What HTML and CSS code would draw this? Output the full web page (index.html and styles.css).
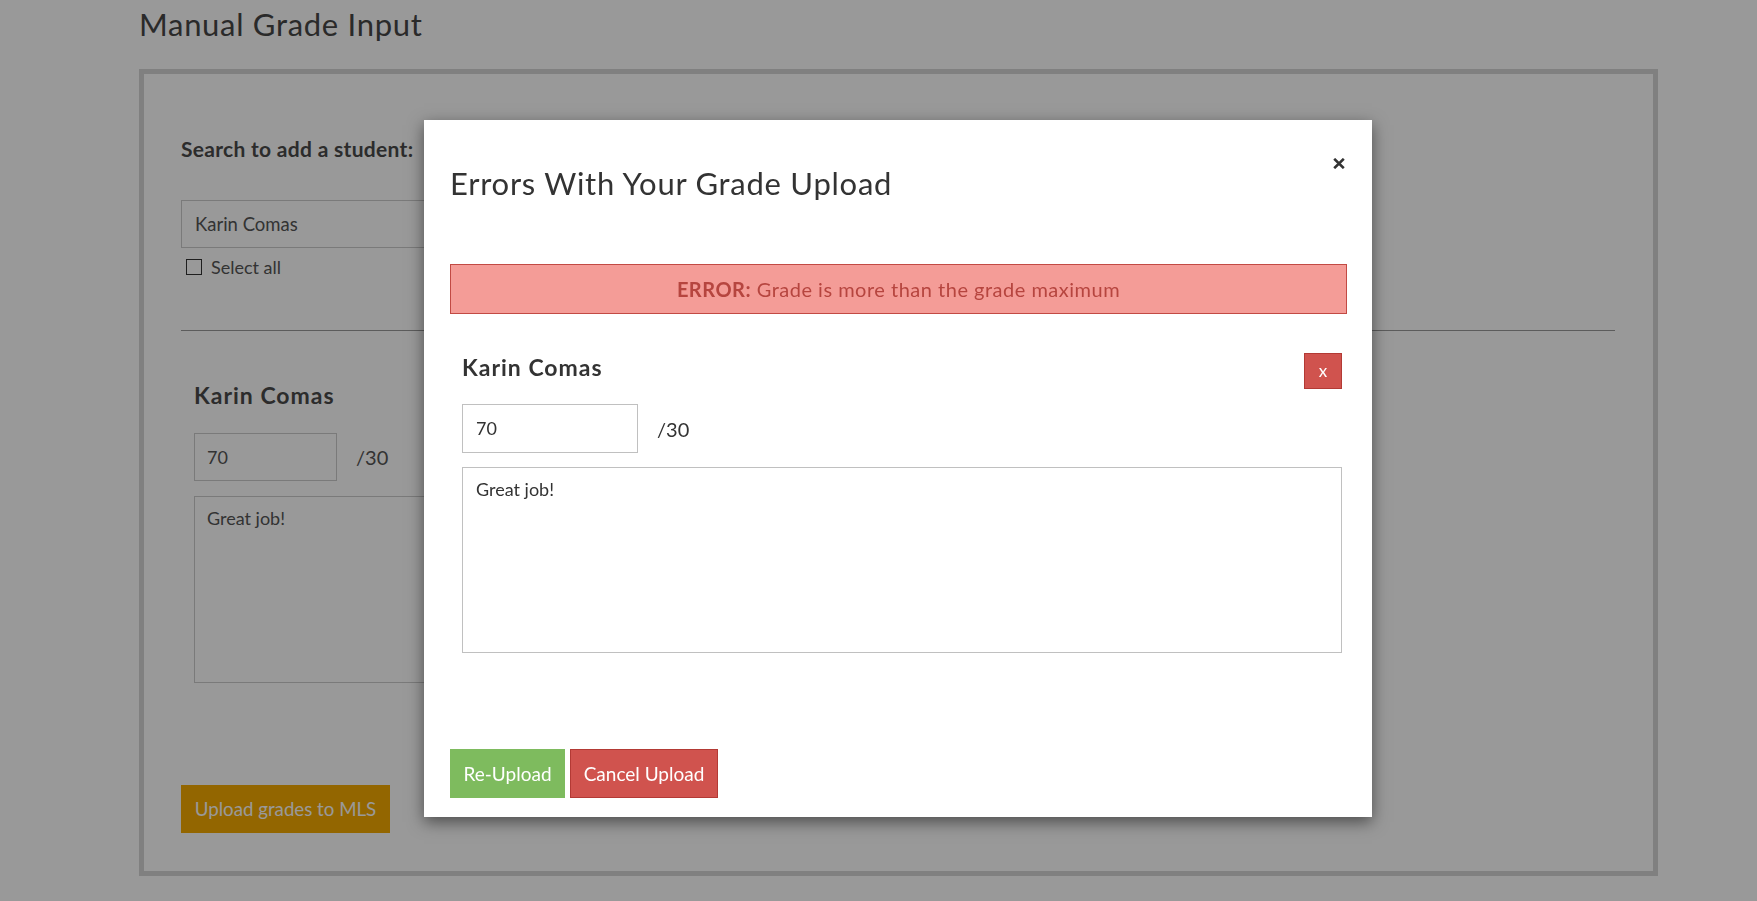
FILE: index.html
```html
<!DOCTYPE html>
<html lang="en">
<head>
<meta charset="utf-8">
<title>Manual Grade Input</title>
<link rel="stylesheet" href="styles.css">
</head>
<body>
<div class="page">
  <h1 class="page-title">Manual Grade Input</h1>
  <div class="box">
    <div class="search">
      <label class="search-label">Search to add a student:</label>
      <div class="search-input">Karin Comas</div>
      <div class="select-all"><span class="checkbox"></span><span>Select all</span></div>
    </div>
    <div class="rule"></div>
    <div class="student">
      <div class="student-name">Karin Comas</div>
      <div class="grade-row">
        <div class="grade-input">70</div>
        <span class="grade-max">/30</span>
      </div>
      <div class="comment">Great job!</div>
    </div>
    <div class="upload-row">
      <button class="btn-upload">Upload grades to MLS</button>
    </div>
  </div>
</div>

<div class="backdrop"></div>

<div class="modal">
  <div class="modal-header">
    <h2 class="modal-title">Errors With Your Grade Upload</h2>
    <span class="modal-close" aria-label="Close"><svg width="12" height="11" viewBox="0 0 12 11"><path d="M1.2 0.8 L10.8 10.2 M10.8 0.8 L1.2 10.2" stroke="#333" stroke-width="2.6" fill="none"/></svg></span>
  </div>
  <div class="alert"><strong>ERROR:</strong> Grade is more than the grade maximum</div>
  <div class="m-student">
    <div class="m-student-head">
      <div class="m-name">Karin Comas</div>
      <button class="btn-x">x</button>
    </div>
    <div class="m-grade-row">
      <div class="m-grade-input">70</div>
      <span class="m-grade-max">/30</span>
    </div>
    <div class="m-comment">Great job!</div>
  </div>
  <div class="modal-footer">
    <button class="btn btn-green">Re-Upload</button>
    <button class="btn btn-red">Cancel Upload</button>
  </div>
</div>
</body>
</html>
```
FILE: styles.css
```css
* { box-sizing: border-box; }
html, body { margin: 0; padding: 0; }
body {
  background: #fff;
  font-family: Lato, "Open Sans", "Liberation Sans", sans-serif;
  color: #444;
  height: 901px;
  overflow: hidden;
}
.page {
  margin-left: 139px;
  width: 1519px;
}
.page-title {
  margin: 0;
  padding-top: 6px;
  font-size: 31px;
  font-weight: 400;
  letter-spacing: 0.7px;
  line-height: 36px;
  height: 69px;
  color: #474747;
}
.box {
  border: 5px solid #d5d5d5;
  height: 807px;
  padding: 0 38px 0 37px;
  display: flex;
  flex-direction: column;
}
.search { padding-top: 63px; }
.search-label {
  display: block;
  font-size: 21px;
  font-weight: 700;
  letter-spacing: 0.3px;
  line-height: 24px;
  color: #4a4a4a;
}
.search-input {
  margin-top: 39px;
  width: 700px;
  height: 48px;
  border: 1px solid #ccc;
  padding: 0 13px;
  font-size: 18.5px;
  line-height: 46px;
  color: #555;
}
.select-all {
  display: flex;
  align-items: center;
  gap: 9px;
  height: 20px;
  margin-top: 9px;
  margin-left: 5px;
  font-size: 18px;
  color: #555;
}
.checkbox {
  width: 16px; height: 16px;
  border: 1.5px solid #333;
  background: #fff;
}
.rule {
  margin-top: 53px;
  height: 1px;
  background: #999;
}
.student { padding: 51px 0 0 13px; }
.student-name {
  font-size: 23px;
  font-weight: 700;
  letter-spacing: 1px;
  color: #4a4a4a;
  line-height: 26px;
}
.grade-row { display: flex; align-items: center; gap: 19px; margin-top: 25px; }
.grade-input {
  width: 143px; height: 48px;
  border: 1px solid #ccc;
  padding: 0 12px;
  font-size: 18px; line-height: 46px; color: #555;
}
.grade-max { font-size: 20px; color: #555; }
.comment {
  margin-top: 15px;
  width: 900px; height: 187px;
  border: 1px solid #ccc;
  padding: 10px 12px;
  font-size: 18px; line-height: 22px; color: #555;
}
.upload-row { margin-top: 102px; }
.btn-upload {
  width: 209px; height: 48px;
  border: 0;
  background: #f6ab00;
  color: #fff;
  font-family: inherit;
  font-size: 18.7px;
  padding: 0;
}
.backdrop {
  position: fixed;
  inset: 0;
  background: rgba(0, 0, 0, 0.4);
}
.modal {
  position: absolute;
  left: 424px;
  top: 120px;
  width: 948px;
  height: 697px;
  background: #fff;
  box-shadow: 0 5px 15px rgba(0, 0, 0, 0.5);
  display: flex;
  flex-direction: column;
}
.modal-header {
  display: flex;
  justify-content: space-between;
  align-items: flex-start;
  padding: 38px 27px 0 26px;
  height: 144px;
}
.modal-title {
  margin: 7px 0 0;
  font-size: 31px;
  font-weight: 400;
  letter-spacing: 0.73px;
  line-height: 36px;
  color: #333;
}
.modal-close {
  display: block;
  width: 12px;
  height: 11px;
  line-height: 0;
}
.alert {
  margin: 0 25px 0 26px;
  height: 50px;
  background: #f49c97;
  border: 1px solid #c24a44;
  color: #b6453f;
  font-size: 20px;
  letter-spacing: 0.5px;
  line-height: 48px;
  text-align: center;
}
.alert strong { font-weight: 700; }
.m-student { padding: 39px 30px 0 38px; }
.m-student-head {
  display: flex;
  justify-content: space-between;
  align-items: flex-start;
}
.m-name {
  font-size: 23px;
  font-weight: 700;
  letter-spacing: 1px;
  line-height: 26px;
  color: #333;
  margin-top: 1px;
}
.btn-x {
  width: 38px; height: 36px;
  background: #d0534e;
  border: 1px solid #b33a35;
  color: #fff;
  font-family: inherit;
  font-size: 17px;
  padding: 0 0 2px;
}
.m-grade-row { display: flex; align-items: center; gap: 19px; margin-top: 15px; }
.m-grade-input {
  width: 176px; height: 49px;
  border: 1px solid #c0c0c0;
  padding: 0 13px;
  font-size: 18px; line-height: 47px; color: #333;
}
.m-grade-max { font-size: 20px; color: #333; }
.m-comment {
  margin-top: 14px;
  height: 186px;
  border: 1px solid #c0c0c0;
  padding: 10px 13px;
  font-size: 18px; line-height: 22px; color: #333;
}
.modal-footer {
  margin-top: auto;
  padding: 0 0 19px 26px;
  display: flex;
  gap: 5px;
}
.btn {
  height: 49px;
  border: 1px solid transparent;
  color: #fff;
  font-family: inherit;
  font-size: 19px;
  padding: 0;
}
.btn-green { background: #7ebb5e; border-color: #7ebb5e; width: 115px; }
.btn-red { background: #d0534e; border-color: #b33a35; width: 148px; }
```
